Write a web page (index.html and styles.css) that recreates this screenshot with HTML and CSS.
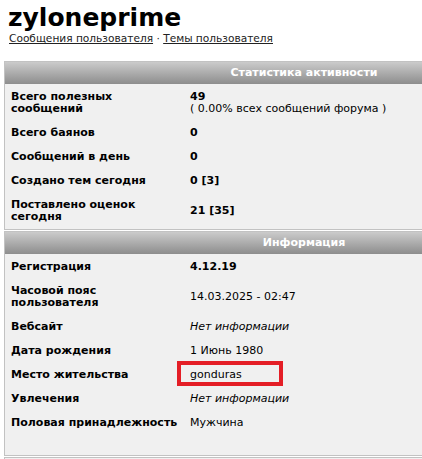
FILE: index.html
```html
<!DOCTYPE html>
<html lang="ru">
<head>
<meta charset="utf-8">
<title>zyloneprime</title>
<link rel="stylesheet" href="styles.css">
</head>
<body>
<div class="page">
  <h1 class="name">zyloneprime</h1>
  <div class="links"><a href="#">Сообщения пользователя</a> · <a href="#">Темы пользователя</a></div>

  <div class="box stats">
    <div class="box-head">Статистика активности</div>
    <table class="rows">
      <tr><td class="label">Всего полезных сообщений</td><td class="value"><b>49</b><br>( 0.00% всех сообщений форума )</td></tr>
      <tr><td class="label">Всего баянов</td><td class="value"><b>0</b></td></tr>
      <tr><td class="label">Сообщений в день</td><td class="value"><b>0</b></td></tr>
      <tr><td class="label">Создано тем сегодня</td><td class="value"><b>0 [3]</b></td></tr>
      <tr><td class="label">Поставлено оценок сегодня</td><td class="value"><b>21 [35]</b></td></tr>
    </table>
  </div>

  <div class="box info">
    <div class="box-head">Информация</div>
    <table class="rows">
      <tr><td class="label">Регистрация</td><td class="value"><b>4.12.19</b></td></tr>
      <tr><td class="label">Часовой пояс пользователя</td><td class="value">14.03.2025 - 02:47</td></tr>
      <tr><td class="label">Вебсайт</td><td class="value"><i>Нет информации</i></td></tr>
      <tr><td class="label">Дата рождения</td><td class="value">1 Июнь 1980</td></tr>
      <tr><td class="label">Место жительства</td><td class="value"><span class="marked">gonduras</span></td></tr>
      <tr><td class="label">Увлечения</td><td class="value"><i>Нет информации</i></td></tr>
      <tr><td class="label">Половая принадлежность</td><td class="value">Мужчина</td></tr>
    </table>
  </div>

  <div class="box tail"></div>
</div>
</body>
</html>
```

FILE: styles.css
```css
html, body {
  margin: 0;
  padding: 0;
  background: #ffffff;
  overflow: hidden;
}

body {
  font-family: "DejaVu Sans", Verdana, sans-serif;
  font-size: 11px;
  color: #000000;
}

.page {
  width: 620px;
}

.name {
  margin: 4px 0 0 8px;
  font-size: 25px;
  line-height: 28px;
  font-weight: bold;
  color: #000000;
}

.links {
  margin-left: 9px;
  font-size: 10.6px;
  line-height: 13px;
  color: #222222;
}

.links a {
  color: #222222;
  text-decoration: underline;
}

.box {
  margin-left: 4px;
  width: 598px;
  border: 1px solid #c2c2c2;
  background: #f0f0f0;
}

.stats {
  margin-top: 16px;
  padding-bottom: 1px;
}

.info {
  margin-top: 1px;
  padding-bottom: 21px;
}

.tail {
  margin-top: 1px;
  height: 20px;
}

.box-head {
  height: 22px;
  line-height: 22px;
  text-align: center;
  color: #ffffff;
  font-weight: bold;
  background: linear-gradient(#cbcbcb, #8d8d8d);
}

.rows {
  border-collapse: collapse;
  table-layout: fixed;
  width: 100%;
}

.rows td {
  padding: 7px 6px 5px;
  line-height: 12px;
  vertical-align: middle;
  box-sizing: border-box;
}

.rows .label {
  width: 179px;
  font-weight: bold;
}

.marked {
  position: relative;
}

.marked::after {
  content: "";
  position: absolute;
  left: -13px;
  top: -7px;
  width: 106px;
  height: 25px;
  box-sizing: border-box;
  border: 4px solid #e41e26;
}
```
